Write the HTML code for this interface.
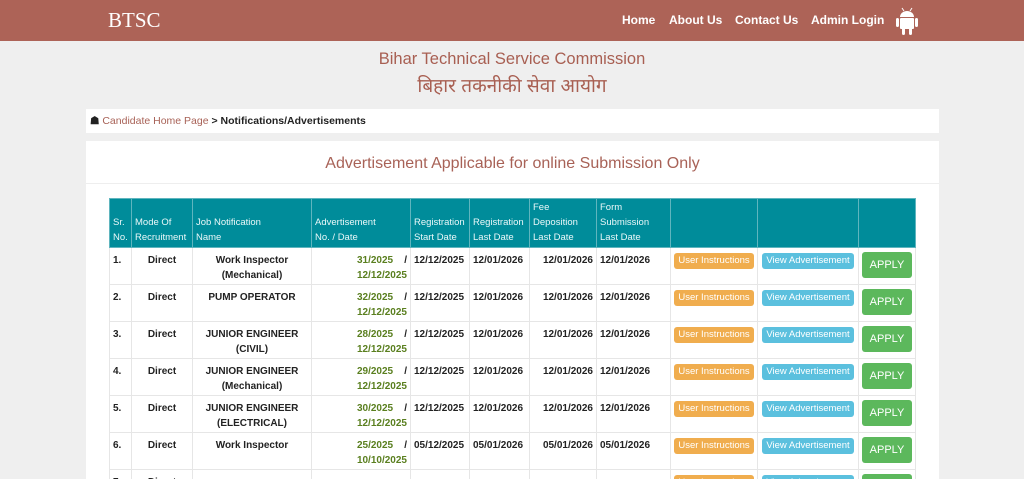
<!DOCTYPE html>
<html style="overflow:hidden;height:479px"><head><meta charset="utf-8"><style>
*{box-sizing:border-box;margin:0;padding:0}
body{width:1024px;height:479px;overflow:hidden;background:#efefef;font-family:"Liberation Sans",sans-serif;position:relative}
.nav{position:absolute;left:0;top:0;width:1024px;height:41px;background:#ad6357}
.logo{position:absolute;left:108px;top:8px;color:#fff;font-family:"Liberation Serif",serif;font-size:21px}
.links{position:absolute;top:13px;color:#fff;font-weight:bold;font-size:12px}
.t1{position:absolute;top:50px;width:1024px;text-align:center;color:#a85f52;font-size:16.5px}
.t2{position:absolute;top:72px;width:1024px;text-align:center;color:#a85f52;font-size:19px;font-family:"Liberation Sans","Noto Sans CJK SC",sans-serif}
.bc{position:absolute;left:86px;top:109px;width:853px;height:24px;background:#fff;font-size:10.5px;padding:6px 0 0 4px;color:#222;font-weight:bold}
.bc span{color:#a86257;font-weight:normal}
.panel{position:absolute;left:86px;top:141px;width:853px;height:338px;background:#fff;overflow:hidden}
.ptitle{position:absolute;top:14px;width:853px;text-align:center;color:#a86257;font-size:16px}
.hr{position:absolute;top:42px;left:0;width:853px;border-top:1px solid #eee}
table{position:absolute;left:23px;top:57px;border-collapse:collapse;table-layout:fixed;font-size:10px}
th{background:#008c9a;color:#eaf8f9;font-weight:normal;text-align:left;vertical-align:bottom;padding:1px 3px 2px;border:1px solid #5fb5be;line-height:15px;height:49px;font-size:9.5px}
td{border:1px solid #e6e6e6;height:37px;vertical-align:top;padding:5px 3px 0;font-weight:bold;color:#222;line-height:15px;white-space:nowrap}
.c{text-align:center}.g{color:#5a7f1f;text-align:right}
.b{display:inline-block;color:#fff;font-weight:normal;font-size:9.5px;border-radius:3px;padding:1px 4px;line-height:14px;white-space:nowrap}
.o{background:#f0ad4e}.bl{background:#5bc0de}
.ap{display:inline-block;background:#5cb85c;color:#fff;font-weight:normal;font-size:11px;border-radius:3px;width:50px;height:26px;line-height:26px;text-align:center;margin-top:-1px}
</style></head><body>
<div class="nav"><div class="logo">BTSC</div>
<div class="links" style="left:622px">Home</div><div class="links" style="left:669px">About Us</div><div class="links" style="left:735px">Contact Us</div><div class="links" style="left:811px">Admin Login</div>
<svg style="position:absolute;left:895px;top:6px" width="24" height="30" viewBox="0 0 24 30" fill="#fff"><path d="M5 11a7 6 0 0 1 14 0z"/><rect x="5" y="12" width="14" height="11" rx="1"/><rect x="1" y="12" width="3" height="9" rx="1.5"/><rect x="20" y="12" width="3" height="9" rx="1.5"/><rect x="7" y="22" width="3" height="7" rx="1.5"/><rect x="14" y="22" width="3" height="7" rx="1.5"/><path d="M7 2l2 3M17 2l-2 3" stroke="#fff"/></svg>
</div>
<div class="t1">Bihar Technical Service Commission</div>
<div class="t2">बिहार तकनीकी सेवा आयोग</div>
<div class="bc">&#9751; <span>Candidate Home Page</span> &gt; Notifications/Advertisements</div>
<div class="panel"><div class="ptitle">Advertisement Applicable for online Submission Only</div><div class="hr"></div>
<table>
<colgroup><col style="width:22px"><col style="width:61px"><col style="width:119px"><col style="width:99px"><col style="width:59px"><col style="width:60px"><col style="width:67px"><col style="width:74px"><col style="width:87px"><col style="width:101px"><col style="width:57px"></colgroup>
<tr><th>Sr.<br>No.</th><th>Mode Of<br>Recruitment</th><th>Job Notification<br>Name</th><th>Advertisement<br>No. / Date</th><th>Registration<br>Start Date</th><th>Registration<br>Last Date</th><th>Fee<br>Deposition<br>Last Date</th><th>Form<br>Submission<br>Last Date</th><th></th><th></th><th></th></tr>
<tr><td>1.</td><td class="c">Direct</td><td class="c">Work Inspector<br>(Mechanical)</td><td class="g">31/2025 &nbsp;&nbsp; <span style="color:#222">/</span><br>12/12/2025</td><td>12/12/2025</td><td>12/01/2026</td><td style="text-align:right">12/01/2026</td><td>12/01/2026</td><td class="c"><span class="b o">User Instructions</span></td><td class="c"><span class="b bl">View Advertisement</span></td><td class="c"><span class="ap">APPLY</span></td></tr>
<tr><td>2.</td><td class="c">Direct</td><td class="c">PUMP OPERATOR</td><td class="g">32/2025 &nbsp;&nbsp; <span style="color:#222">/</span><br>12/12/2025</td><td>12/12/2025</td><td>12/01/2026</td><td style="text-align:right">12/01/2026</td><td>12/01/2026</td><td class="c"><span class="b o">User Instructions</span></td><td class="c"><span class="b bl">View Advertisement</span></td><td class="c"><span class="ap">APPLY</span></td></tr>
<tr><td>3.</td><td class="c">Direct</td><td class="c">JUNIOR ENGINEER<br>(CIVIL)</td><td class="g">28/2025 &nbsp;&nbsp; <span style="color:#222">/</span><br>12/12/2025</td><td>12/12/2025</td><td>12/01/2026</td><td style="text-align:right">12/01/2026</td><td>12/01/2026</td><td class="c"><span class="b o">User Instructions</span></td><td class="c"><span class="b bl">View Advertisement</span></td><td class="c"><span class="ap">APPLY</span></td></tr>
<tr><td>4.</td><td class="c">Direct</td><td class="c">JUNIOR ENGINEER<br>(Mechanical)</td><td class="g">29/2025 &nbsp;&nbsp; <span style="color:#222">/</span><br>12/12/2025</td><td>12/12/2025</td><td>12/01/2026</td><td style="text-align:right">12/01/2026</td><td>12/01/2026</td><td class="c"><span class="b o">User Instructions</span></td><td class="c"><span class="b bl">View Advertisement</span></td><td class="c"><span class="ap">APPLY</span></td></tr>
<tr><td>5.</td><td class="c">Direct</td><td class="c">JUNIOR ENGINEER<br>(ELECTRICAL)</td><td class="g">30/2025 &nbsp;&nbsp; <span style="color:#222">/</span><br>12/12/2025</td><td>12/12/2025</td><td>12/01/2026</td><td style="text-align:right">12/01/2026</td><td>12/01/2026</td><td class="c"><span class="b o">User Instructions</span></td><td class="c"><span class="b bl">View Advertisement</span></td><td class="c"><span class="ap">APPLY</span></td></tr>
<tr><td>6.</td><td class="c">Direct</td><td class="c">Work Inspector</td><td class="g">25/2025 &nbsp;&nbsp; <span style="color:#222">/</span><br>10/10/2025</td><td>05/12/2025</td><td>05/01/2026</td><td style="text-align:right">05/01/2026</td><td>05/01/2026</td><td class="c"><span class="b o">User Instructions</span></td><td class="c"><span class="b bl">View Advertisement</span></td><td class="c"><span class="ap">APPLY</span></td></tr>
<tr><td>7.</td><td class="c">Direct</td><td class="c"></td><td class="g"></td><td></td><td></td><td></td><td></td><td class="c"><span class="b o">User Instructions</span></td><td class="c"><span class="b bl">View Advertisement</span></td><td class="c"><span class="ap">APPLY</span></td></tr>
</table></div>
</body></html>
